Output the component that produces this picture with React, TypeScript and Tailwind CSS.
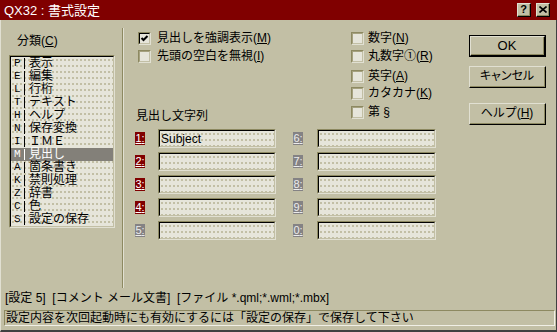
import React from "react";

function U({ children }: { children: React.ReactNode }) {
  return <span className="underline underline-offset-[1px] decoration-1">{children}</span>;
}

function TitleBtn({ children }: { children: React.ReactNode }) {
  return (
    <div className="w-[14px] h-[14px] flex border-t border-l border-t-[#e1e0d2] border-l-[#e1e0d2] border-r border-b border-r-black border-b-black">
      <div className="flex-1 flex items-center justify-center bg-[#c2bfa5] border-r border-b border-r-[#8d8961] border-b-[#8d8961]">
        {children}
      </div>
    </div>
  );
}

function Check({ checked }: { checked?: boolean }) {
  return (
    <span className="w-[13px] h-[13px] shrink-0 flex border-t border-l border-t-[#8d8961] border-l-[#8d8961] border-r border-b border-r-[#e1e0d2] border-b-[#e1e0d2]">
      <span
        className={
          checked
            ? "flex-1 flex items-center justify-center bg-[#e6e5da] border-t border-l border-t-black border-l-black border-r border-b border-r-[#c2bfa5] border-b-[#c2bfa5]"
            : "flex-1 flex items-center justify-center bg-[#e6e5da] border-t border-l border-t-[#a5a17f] border-l-[#a5a17f] border-r border-b border-r-[#c2bfa5] border-b-[#c2bfa5]"
        }
      >
        {checked && (
          <svg width="9" height="9" viewBox="0 0 9 9">
            <polyline points="1.5,4 3.5,6 7.5,2" fill="none" stroke="black" strokeWidth="2" />
          </svg>
        )}
      </span>
    </span>
  );
}

function CheckRow({ checked, gap, className, children }: { checked?: boolean; gap: string; className?: string; children: React.ReactNode }) {
  return (
    <div className={`flex items-center h-[14px] ${gap} ${className ?? ""}`}>
      <Check checked={checked} />
      <span className="whitespace-nowrap leading-[14px]">{children}</span>
    </div>
  );
}

function Btn({ def, children }: { def?: boolean; children: React.ReactNode }) {
  return (
    <div className={def ? "h-[22px] flex border border-black" : "h-[22px] flex"}>
      <div className="flex-1 flex border-t border-l border-t-[#e1e0d2] border-l-[#e1e0d2] border-r border-b border-r-black border-b-black">
        <div className="flex-1 flex items-center justify-center border-r border-b border-r-[#8d8961] border-b-[#8d8961] whitespace-nowrap">
          {children}
        </div>
      </div>
    </div>
  );
}

function NumLabel({ n, red }: { n: string; red?: boolean }) {
  return (
    <span
      className={
        red
          ? "w-[10px] h-[13px] shrink-0 bg-[#800000] text-white text-[11px] leading-[13px] flex items-center justify-center underline underline-offset-[1px]"
          : "w-[10px] h-[13px] shrink-0 bg-[#848284] text-[#ececec] text-[11px] leading-[13px] flex items-center justify-center underline underline-offset-[1px]"
      }
    >
      {n}:
    </span>
  );
}

function TextBox({ w, value }: { w: string; value?: string }) {
  return (
    <div className={`${w} h-[19px] shrink-0 flex border-t border-l border-t-[#8d8961] border-l-[#8d8961] border-r border-b border-r-[#e1e0d2] border-b-[#e1e0d2]`}>
      <div className="flex-1 flex items-center pl-[1px] border-t border-l border-t-black border-l-black border-r border-b border-r-[#c2bfa5] border-b-[#c2bfa5] bg-[#e6e5da] bg-[radial-gradient(circle,#c2bfa5_0.8px,transparent_0.9px)] bg-[length:4px_6px]">
        {value && <span className="text-[12px] leading-[14px] font-['Liberation_Sans',sans-serif]">{value}</span>}
      </div>
    </div>
  );
}

const items: [string, string][] = [
  ["P", "表示"],
  ["E", "編集"],
  ["L", "行桁"],
  ["T", "テキスト"],
  ["H", "ヘルプ"],
  ["N", "保存変換"],
  ["I", "ＩＭＥ"],
  ["M", "見出し"],
  ["A", "箇条書き"],
  ["K", "禁則処理"],
  ["Z", "辞書"],
  ["C", "色"],
  ["S", "設定の保存"],
];

const rows: [string, boolean, string, string][] = [
  ["1", true, "Subject", "6"],
  ["2", true, "", "7"],
  ["3", true, "", "8"],
  ["4", true, "", "9"],
  ["5", false, "", "0"],
];

export default function App() {
  return (
    <div className="w-[557px] h-[332px] overflow-hidden flex flex-col bg-[#c2bfa5] text-black text-[12px] leading-[13px] font-['Liberation_Sans','Noto_Sans_CJK_JP',sans-serif]">
      {/* title bar */}
      <div className="h-[20px] shrink-0 bg-[#800000] flex items-center pl-[4px] pr-[7px]">
        <span className="text-white text-[13px] leading-[15px] whitespace-nowrap">QX32 : 書式設定</span>
        <div className="ml-auto flex items-center gap-[5px]">
          <TitleBtn>
            <span className="text-[11px] leading-[11px] font-bold font-['Liberation_Sans',sans-serif]">?</span>
          </TitleBtn>
          <TitleBtn>
            <svg width="8" height="7" viewBox="0 0 8 7">
              <path d="M0.5 0.5 L7.5 6.5 M7.5 0.5 L0.5 6.5" stroke="black" strokeWidth="1.6" />
            </svg>
          </TitleBtn>
        </div>
      </div>

      {/* body */}
      <div className="flex-1 flex flex-col border-l border-l-[#e1e0d2] border-r border-r-[#404040] border-b-2 border-b-[#404040]">
        <div className="flex h-[268px]">
          {/* left: category list */}
          <div className="w-[121px] pt-[15px] pl-[8px] flex flex-col">
            <div className="ml-[8px] h-[13px] whitespace-nowrap">
              分類(<U>C</U>)
            </div>
            <div className="mt-[7px] w-[106px] h-[173px] flex border-t border-l border-t-[#8d8961] border-l-[#8d8961] border-r border-b border-r-[#e1e0d2] border-b-[#e1e0d2]">
              <div className="flex-1 flex flex-col border-t border-l border-t-black border-l-black border-r border-b border-r-[#c2bfa5] border-b-[#c2bfa5] bg-[#e6e5da] bg-[radial-gradient(circle,#c2bfa5_0.8px,transparent_0.9px)] bg-[length:4px_6px]">
                {items.map(([k, label]) => {
                  const sel = k === "M";
                  return (
                    <div key={k} className={sel ? "h-[13px] flex items-center bg-[#838079] text-white" : "h-[13px] flex items-center"}>
                      <span className="w-[13px] pl-[3px] font-['Liberation_Mono',monospace] text-[11px]">{k}</span>
                      <span className={sel ? "w-px h-[11px] bg-white" : "w-px h-[11px] bg-black"} />
                      <span className="pl-[4px] whitespace-nowrap leading-[13px]">{label}</span>
                    </div>
                  );
                })}
              </div>
            </div>
          </div>

          {/* separator */}
          <div className="mt-[8px] w-[2px] border-l border-l-[#8d8961] border-r border-r-[#e1e0d2]" />

          {/* middle */}
          <div className="w-[345px] flex flex-col">
            <div className="flex h-[104px]">
              <div className="w-[227px] pl-[14px] pt-[11px] flex flex-col">
                <CheckRow checked gap="gap-[6px]">
                  見出しを強調表示(<U>M</U>)
                </CheckRow>
                <CheckRow gap="gap-[6px]" className="mt-[4px]">
                  先頭の空白を無視(<U>I</U>)
                </CheckRow>
                <div className="mt-auto mb-[1px] -ml-[2px] h-[13px] whitespace-nowrap">見出し文字列</div>
              </div>
              <div className="flex flex-col pt-[11px]">
                <CheckRow gap="gap-[4px]">
                  数字(<U>N</U>)
                </CheckRow>
                <CheckRow gap="gap-[4px]" className="mt-[4px]">
                  丸数字①(<U>R</U>)
                </CheckRow>
                <CheckRow gap="gap-[4px]" className="mt-[6px]">
                  英字(<U>A</U>)
                </CheckRow>
                <CheckRow gap="gap-[4px]" className="mt-[3px]">
                  カタカナ(<U>K</U>)
                </CheckRow>
                <CheckRow gap="gap-[4px]" className="mt-[5px]">
                  第 §
                </CheckRow>
              </div>
            </div>
            <div className="mt-[5px] pl-[11px] flex flex-col gap-[4px]">
              {rows.map(([a, red, val, b]) => (
                <div key={a} className="flex items-center h-[19px]">
                  <NumLabel n={a} red={red} />
                  <div className="ml-[13px]">
                    <TextBox w="w-[118px]" value={val} />
                  </div>
                  <div className="ml-[17px]">
                    <NumLabel n={b} />
                  </div>
                  <div className="ml-[14px]">
                    <TextBox w="w-[119px]" />
                  </div>
                </div>
              ))}
            </div>
          </div>

          {/* buttons */}
          <div className="w-[77px] pt-[15px] flex flex-col">
            <Btn def>
              <span className="text-[13px]">OK</span>
            </Btn>
            <div className="mt-[9px]">
              <Btn>
                <span className="[font-feature-settings:'palt']">キャンセル</span>
              </Btn>
            </div>
            <div className="mt-[15px]">
              <Btn>
                ヘルプ(<U>H</U>)
              </Btn>
            </div>
          </div>
        </div>

        {/* info line */}
        <div className="pt-[4px] pl-[4px] h-[17px] whitespace-nowrap">
          [設定 5]&nbsp;&nbsp;[コメント メール文書]&nbsp;&nbsp;[ファイル *.qml;*.wml;*.mbx]
        </div>

        {/* status bar */}
        <div className="mt-[5px] ml-[3px] mr-[1px] h-[16px] flex items-center pl-[1px] border-t border-l border-t-[#8d8961] border-l-[#8d8961] border-r border-b border-r-[#f0efe6] border-b-[#f0efe6]">
          <span className="whitespace-nowrap leading-[14px]">設定内容を次回起動時にも有効にするには「設定の保存」で保存して下さい</span>
        </div>
      </div>
    </div>
  );
}
